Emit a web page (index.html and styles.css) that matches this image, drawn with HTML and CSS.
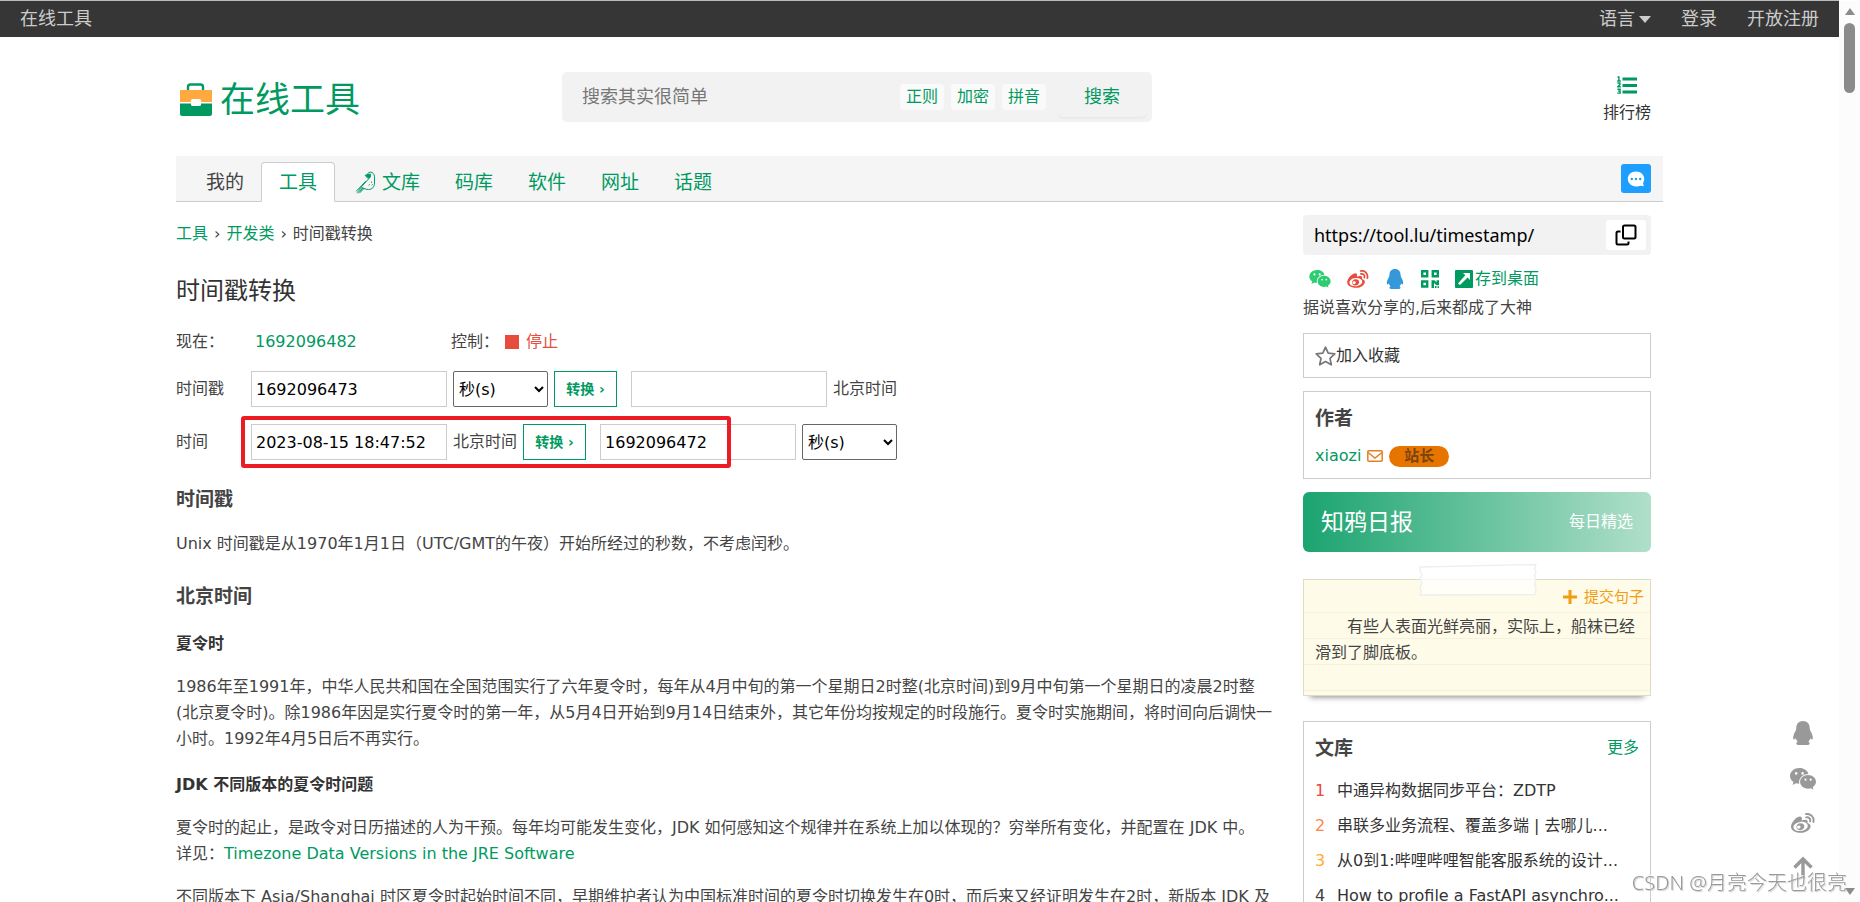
FILE: index.html
```html
<!DOCTYPE html>
<html lang="zh-CN">
<head>
<meta charset="utf-8">
<title>时间戳转换 - 在线工具</title>
<link rel="stylesheet" href="styles.css">
</head>
<body>
<svg class="defs" aria-hidden="true">
  <symbol id="qq" viewBox="0 0 20 24"><path d="M10 0C5.700 0 3.300 3.100 3.300 7c0 1-.2 1.700-.7 2.800C1 12.500 0 15 .2 17.200c.1 1.100.5 1.600 1 1.300.6-.3 1-.7 1.400-1.200.3 1.300 1 2.500 2 3.400-.8.500-1.300 1-1.300 1.700 0 1.100 1.400 1.600 3.400 1.600h6.600c2 0 3.400-.5 3.400-1.600 0-.7-.5-1.200-1.300-1.700 1-.9 1.700-2.100 2-3.400.4.500.8.9 1.400 1.200.5.300.9-.2 1-1.300.2-2.200-.8-4.700-2.400-7.400-.5-1.100-.7-1.800-.7-2.800C16.700 3.100 14.300 0 10 0z" fill="currentColor"/></symbol>
  <symbol id="wechat" viewBox="0 0 26 22"><path fill="currentColor" fill-rule="evenodd" d="M9.500 0C4.200 0 0 3.500 0 7.900c0 2.500 1.300 4.600 3.500 6L2.600 17l3.400-1.700c1.200.3 2 .5 3.200.5-.9-5.500 3.200-9.700 9.300-9.900C17.500 2.400 13.900 0 9.500 0zM6.200 4.100a1.300 1.300 0 1 1 0 2.600 1.300 1.300 0 0 1 0-2.600zm6.400 0a1.300 1.300 0 1 1 0 2.600 1.300 1.300 0 0 1 0-2.600zM18.100 6.900c-4.600 0-8 3.100-8 6.900s3.500 6.900 8 6.900c1 0 1.900-.2 2.800-.5l2.500 1.500-.7-2.500c2-1.300 3.300-3.200 3.300-5.400 0-3.800-3.600-6.900-7.900-6.900zm-2.600 3.700a1 1 0 1 1 0 2.100 1 1 0 0 1 0-2.100zm5.200 0a1 1 0 1 1 0 2.100 1 1 0 0 1 0-2.100z"/></symbol>
  <symbol id="weibo" viewBox="0 0 24 20"><path fill="currentColor" fill-rule="evenodd" d="M10.500 4.200c.9 1 .3 2.800.3 3.200 2.500-1 5-.9 5.700.3.400.7.100 1.700-.1 2.300 1.900.5 3.200 1.500 3.200 3.200 0 3-4.200 6.600-9.800 6.600C4.400 19.800 0 17.300 0 13.700c0-2 1.300-4.600 3.500-6.900 2.800-2.800 5.700-4 7-2.600zM9.200 8.900c-4 .4-7 2.900-6.700 5.500.3 2.500 3.600 4 7.600 3.600s6.900-2.900 6.600-5.500c-.2-2.500-3.600-4-7.500-3.600zm-.1 1.400c2.800-.3 4.600 1.500 4.200 3.700-.4 2.200-2.500 3.400-4.700 3.200-2.100-.2-3.400-1.700-3.100-3.600.3-1.800 1.700-3.100 3.600-3.300zm-1.200 2.300c-1.100 0-1.900.8-1.900 1.700s.7 1.500 1.700 1.400c1.100-.1 1.900-.9 1.800-1.800 0-.8-.7-1.300-1.600-1.300z"/><path d="M15.200 4.400c2.600-.5 4.600 1.400 3.900 4M14.900 1.100c4.700-1 8.600 3 7.500 7.900" fill="none" stroke="currentColor" stroke-width="1.900" stroke-linecap="round"/></symbol>
</svg>

<div class="page">
  <header class="topbar">
    <a href="#">在线工具</a>
    <nav class="topbar-right" aria-label="账户">
      <a href="#">语言<span class="caret"></span></a>
      <a href="#">登录</a>
      <a href="#">开放注册</a>
    </nav>
  </header>

  <div class="container">
    <div class="masthead">
      <a class="logo" href="#">
        <svg width="34" height="34" viewBox="0 0 34 34" aria-hidden="true"><path d="M9 8V4q0-2.500 2.500-2.500h10Q24 1.500 24 4v4" fill="none" stroke="#009a61" stroke-width="2.400"/><path d="M1 7h32v12H1z" fill="#ffa940"/><path d="M1 20.500h32V31q0 2-2 2H3q-2 0-2-2z" fill="#009a61"/><rect x="12" y="16" width="10" height="7" rx="1.500" fill="#fff"/></svg>
        <span>在线工具</span>
      </a>
      <form class="search">
        <input type="text" placeholder="搜索其实很简单" aria-label="搜索">
        <a class="tag" href="#">正则</a><a class="tag" href="#">加密</a><a class="tag" href="#">拼音</a>
        <button type="button">搜索</button>
      </form>
      <a class="rank" href="#">
        <svg width="20" height="18" viewBox="0 0 20 18" aria-hidden="true"><path d="M5.500 1.500H20v3H5.500zM5.500 8H20v3H5.500zM5.500 14.500H20v3H5.500z" fill="#009a61"/><path d="M.5 1h1.400v4M.2 5h3.600M.4 7h2.500v1.600L.8 10.800h3M.4 13.200h2.700v3.900H.3M1 15.100h2" fill="none" stroke="#009a61" stroke-width="1.400"/></svg>
        <span>排行榜</span>
      </a>
    </div>

    <nav class="tabs" aria-label="栏目">
      <a class="mine" href="#">我的</a>
      <a class="active" href="#">工具</a>
      <a href="#"><svg class="parrot" width="22" height="24" viewBox="0 0 22 24" fill="none" stroke="#009a61" stroke-width="1" stroke-linecap="round" stroke-linejoin="round" aria-hidden="true"><path d="M12 5C12.500 2.500 15 1.500 17 2.500c2 1 2.500 3 2.500 5.500v5c0 4-2.500 6.500-6 6.500-1.800 0-3-.4-4.500-1M15.500 6.500 13.500 9 4 19.500M2 22.500l5-5 2 1-4 4M3.500 23l4-4.500M1.500 21l9-9.500"/><path d="M10.500 5.200 15.500 4 15 7.500l-2 .5z" fill="#009a61"/><path d="M16.500 12v.5M17.500 14.500l-.5.500M14 15l.5-.3"/></svg>文库</a>
      <a href="#">码库</a>
      <a href="#">软件</a>
      <a href="#">网址</a>
      <a href="#">话题</a>
      <button class="chat" type="button" aria-label="留言"><svg width="18" height="16" viewBox="0 0 18 16" aria-hidden="true"><path d="M9 .5c4.700 0 8.200 3.200 8.200 7.300 0 1.800-.6 3.300-1.200 4.400l.8 3.100-3-.5C12.400 15.400 10.800 15.500 9 15.500 4.300 15.500.8 12 .8 7.800S4.300.5 9 .5z" fill="#fff"/><g fill="#1e9fff"><circle cx="4.800" cy="8" r="1.200"/><circle cx="9" cy="8" r="1.200"/><circle cx="13.200" cy="8" r="1.200"/></g></svg></button>
    </nav>

    <div class="columns">
      <main>
        <nav class="crumbs" aria-label="面包屑"><a href="#">工具</a><span>›</span><a href="#">开发类</a><span>›</span>时间戳转换</nav>
        <h1>时间戳转换</h1>

        <div class="now"><span class="lab">现在：</span><span class="clock">1692096482</span><span>控制：</span><a class="stop" href="#"><i></i>停止</a></div>

        <form class="convert">
          <div class="row">
            <label class="lab" for="ts">时间戳</label>
            <input id="ts" type="text" value="1692096473">
            <select aria-label="单位"><option>秒(s)</option></select>
            <button type="button">转换 ›</button>
            <input class="result" type="text" aria-label="转换结果">
            <span>北京时间</span>
          </div>
          <div class="row">
            <label class="lab" for="dt">时间</label>
            <input id="dt" type="text" value="2023-08-15 18:47:52">
            <span>北京时间</span>
            <button type="button">转换 ›</button>
            <input class="result" type="text" value="1692096472" aria-label="时间戳结果">
            <select aria-label="结果单位"><option>秒(s)</option></select>
            <div class="marker"></div>
          </div>
        </form>

        <h2>时间戳</h2>
        <p>Unix 时间戳是从1970年1月1日（UTC/GMT的午夜）开始所经过的秒数，不考虑闰秒。</p>
        <h2>北京时间</h2>
        <h3>夏令时</h3>
        <p>1986年至1991年，中华人民共和国在全国范围实行了六年夏令时，每年从4月中旬的第一个星期日2时整(北京时间)到9月中旬第一个星期日的凌晨2时整<br>(北京夏令时)。除1986年因是实行夏令时的第一年，从5月4日开始到9月14日结束外，其它年份均按规定的时段施行。夏令时实施期间，将时间向后调快一<br>小时。1992年4月5日后不再实行。</p>
        <h3>JDK 不同版本的夏令时问题</h3>
        <p>夏令时的起止，是政令对日历描述的人为干预。每年均可能发生变化，JDK 如何感知这个规律并在系统上加以体现的？穷举所有变化，并配置在 JDK 中。<br>详见：<a href="#">Timezone Data Versions in the JRE Software</a></p>
        <p>不同版本下 Asia/Shanghai 时区夏令时起始时间不同，早期维护者认为中国标准时间的夏令时切换发生在0时，而后来又经证明发生在2时，新版本 JDK 及</p>
      </main>

      <aside>
        <div class="url">
          <input type="text" value="https://tool.lu/timestamp/" aria-label="网址" readonly>
          <button type="button" aria-label="复制"><svg width="22" height="22" viewBox="0 0 22 22" fill="none" stroke="#000" stroke-width="2" aria-hidden="true"><rect x="8" y="1.500" width="12.500" height="13" rx="1.500"/><path d="M5.500 7.500H3Q1.500 7.500 1.500 9v10q0 1.500 1.500 1.500h9q1.500 0 1.500-1.500v-1.500"/></svg></button>
        </div>
        <div class="share">
          <a class="c-wechat" href="#" aria-label="微信"><svg width="22" height="18"><use href="#wechat"/></svg></a>
          <a class="c-weibo" href="#" aria-label="微博"><svg width="22" height="18"><use href="#weibo"/></svg></a>
          <a class="c-qq" href="#" aria-label="QQ"><svg width="20" height="20"><use href="#qq"/></svg></a>
          <a href="#" aria-label="二维码"><svg width="18" height="18" viewBox="0 0 18 18"><path d="M1.200 1.200h5v5h-5zM11.800 1.200h5v5h-5zM1.200 11.500h5v5h-5z" fill="none" stroke="#009a61" stroke-width="2.400"/><path d="M10.500 10.200h3l2 2.400v-2.400H18v5h-2.500L13 13v5h-2.500zM14 16h1.500v2H14zM16.500 16.200H18V18h-1.500z" fill="#009a61"/></svg></a>
          <a class="desk" href="#"><svg width="18" height="18" viewBox="0 0 18 18" aria-hidden="true"><rect width="18" height="18" rx="1" fill="#009a61"/><path d="M8 3h7v7l-2.400-2.400L5 15l-2-1.500 7.300-8.200z" fill="#fff"/></svg>存到桌面</a>
        </div>
        <div class="slogan">据说喜欢分享的,后来都成了大神</div>

        <a class="box fav" href="#"><svg width="21" height="20" viewBox="0 0 21 20" aria-hidden="true"><path d="M10.500 1.200l2.700 5.900 6.600.7-4.800 4.500 1.300 6.500-5.800-3.200-5.800 3.200L6 12.300 1.200 7.800l6.600-.7z" fill="none" stroke="#777" stroke-width="1.700" stroke-linejoin="round"/></svg>加入收藏</a>

        <section class="box author">
          <h2>作者</h2>
          <div class="who"><a href="#">xiaozi</a><svg width="16" height="12" viewBox="0 0 16 12" fill="none" stroke="#e67e22" stroke-width="1.500" aria-hidden="true"><rect x=".8" y=".8" width="14.400" height="10.400" rx="1"/><path d="M1 2.500 8 8l7-5.500"/></svg><span class="pill">站长</span></div>
        </section>

        <a class="banner" href="#"><b>知鸦日报</b><span>每日精选</span></a>

        <section class="note">
          <svg class="tape" width="118" height="32" viewBox="0 0 118 32" aria-hidden="true"><path d="M1 3 117 .5l-1.500 4 1.500 4-1.500 4 1.500 4-1.500 4 1.500 4-1 6L1 31l1.500-4L1 23l2-4-2-4 2-4-2-4z" fill="#fff" fill-opacity=".75" stroke="#eeeeeb" stroke-width="1.300"/></svg>
          <a class="submit" href="#"><svg width="14" height="14" viewBox="0 0 14 14" aria-hidden="true"><path d="M7 0v14M0 7h14" stroke="#f39c12" stroke-width="3"/></svg>提交句子</a>
          <p>有些人表面光鲜亮丽，实际上，船袜已经滑到了脚底板。</p>
        </section>

        <section class="box docs">
          <div class="docs-head"><h2>文库</h2><a href="#">更多</a></div>
          <ol>
            <li><em>1</em><a href="#">中通异构数据同步平台：ZDTP</a></li>
            <li><em>2</em><a href="#">串联多业务流程、覆盖多端 | 去哪儿...</a></li>
            <li><em>3</em><a href="#">从0到1:哔哩哔哩智能客服系统的设计...</a></li>
            <li><em>4</em><a href="#">How to profile a FastAPI asynchro...</a></li>
          </ol>
        </section>
      </aside>
    </div>
  </div>
</div>

<div class="float">
  <a href="#" aria-label="QQ"><svg width="20" height="24"><use href="#qq"/></svg></a>
  <a href="#" aria-label="微信"><svg width="26" height="22"><use href="#wechat"/></svg></a>
  <a href="#" aria-label="微博"><svg width="24" height="20"><use href="#weibo"/></svg></a>
  <a href="#" aria-label="返回顶部"><svg width="20" height="24" viewBox="0 0 20 24"><path d="M10 23V3M1.500 11.500 10 3l8.500 8.500" fill="none" stroke="currentColor" stroke-width="3.400"/></svg></a>
</div>
<div class="scroll"><i class="up"></i><i class="thumb"></i><i class="down"></i></div>
<div class="watermark">CSDN @月亮今天也很亮</div>
</body>
</html>
```

FILE: styles.css
```css
* { box-sizing: border-box; }
html, body { height: 100%; }
body {
  margin: 0;
  overflow: hidden;
  background: #fff;
  color: #444;
  font: 16px/26px "DejaVu Sans", "Noto Sans CJK SC", sans-serif;
}
a { color: #009a61; text-decoration: none; }
svg { display: block; flex: none; }
input, select, button { font: inherit; color: #000; margin: 0; }
h1, h2, h3, p, ol { margin: 0; padding: 0; }
.defs { position: absolute; width: 0; height: 0; }
.page { height: 100%; overflow: hidden; margin-right: 21px; }

.topbar {
  display: flex;
  justify-content: space-between;
  align-items: center;
  height: 37px;
  padding: 0 20px;
  border-top: 1px solid #bbb;
  background: #363636;
  font-size: 18px;
}
.topbar a { color: #ccc; display: flex; align-items: center; }
.topbar-right { display: flex; gap: 30px; }
.caret { margin-left: 4px; border: 6px solid transparent; border-top: 7px solid #ccc; border-bottom: 0; }

.container { max-width: 1487px; margin: 0 auto; }
.masthead {
  display: flex;
  justify-content: space-between;
  align-items: center;
  height: 119px;
  padding: 0 12px 0 3px;
}
.logo { display: flex; align-items: center; gap: 7px; padding-top: 6px; font-size: 35px; line-height: 50px; width: 383px; }
.search {
  display: flex;
  align-items: center;
  width: 590px;
  height: 50px;
  padding: 0 5px 0 20px;
  border-radius: 5px;
  background: #f2f2f2;
}
.search input { flex: 1; min-width: 0; border: 0; padding: 0; background: none; font-size: 18px; outline: 0; }
.search input::placeholder { color: #777; opacity: 1; }
.tag { padding: 0 6px; margin-right: 7px; border-radius: 4px; background: #fafafa; }
.search button {
  width: 90px;
  height: 40px;
  margin-left: 4px;
  border: 0;
  border-radius: 5px;
  background: #f2f2f2;
  box-shadow: 0 2px 2px -1px #e4e4e4;
  color: #009a61;
  font-size: 18px;
}
.rank { display: flex; flex-direction: column; align-items: center; gap: 6px; margin-left: auto; padding-top: 9px; color: #333; }

.tabs {
  display: flex;
  align-items: flex-end;
  height: 46px;
  padding: 0 12px;
  border-bottom: 1px solid #ccc;
  background: #f5f5f5;
}
.tabs a {
  display: flex;
  align-items: center;
  height: 40px;
  margin: 0 0 -1px -1px;
  padding: 0 17px;
  border: 1px solid transparent;
  font-size: 19px;
}
.tabs .mine { color: #444; margin-left: 0; }
.tabs .active { border-color: #ccc; border-bottom-color: #fff; border-radius: 4px 4px 0 0; background: #fff; }
.parrot { margin: 0 5px 0 3px; }
.chat {
  display: grid;
  place-items: center;
  width: 30px;
  height: 29px;
  margin: 0 0 8px auto;
  padding: 0;
  border: 0;
  border-radius: 3px;
  background: #1e9fff;
}

.columns { display: flex; gap: 24px; padding-right: 12px; }
main { flex: 1; min-width: 0; padding-top: 19px; white-space: nowrap; }
aside { width: 348px; flex: none; padding-top: 13px; }
.crumbs span { margin: 0 6px; }
h1 { margin-top: 25px; font-size: 24px; line-height: 38px; font-weight: 400; color: #333; }
.now { display: flex; margin-top: 19px; }
.lab { width: 75px; flex: none; }
.now .lab { width: 79px; }
.clock { width: 196px; color: #009a61; }
.stop { display: flex; align-items: center; gap: 7px; color: #e74c3c; margin-left: 6px; }
.stop i { width: 14px; height: 14px; background: #e74c3c; }

.convert { display: grid; gap: 17px; margin-top: 16px; }
.row { position: relative; display: flex; align-items: center; height: 36px; gap: 6px; }
.row .lab { width: 69px; }
.row input { width: 196px; height: 36px; padding: 0 4px; border: 1px solid #ccc; background: #fff; }
.row select { width: 95px; height: 36px; padding: 0 1px; border: 1px solid #666; border-radius: 2px; background: #fff; }
.row button {
  width: 63px;
  height: 36px;
  padding: 0;
  border: 1px solid #009a61;
  background: #fff;
  color: #009a61;
  font-size: 14px;
  font-weight: 700;
}
.row .result { margin-left: 8px; }
.marker { position: absolute; left: 65px; top: -8px; width: 490px; height: 52px; border: 4px solid #ed1c24; border-radius: 3px; }

h2 { font-size: 19px; line-height: 30px; }
main h2 { margin-top: 24px; }
h3 { margin-top: 20px; color: #333; font-size: 16px; line-height: 26px; }
main p { margin-top: 17px; }

.url { display: flex; align-items: center; height: 40px; padding: 0 5px 0 11px; border-radius: 4px; background: #f2f2f2; }
.url input { flex: 1; min-width: 0; border: 0; padding: 0; background: none; font: 18px/26px "Noto Sans", sans-serif; }
.url button { display: grid; place-items: center; width: 40px; height: 30px; padding: 0; border: 0; border-radius: 3px; background: #fff; }
.share { display: flex; align-items: center; gap: 16px; height: 24px; margin: 12px 0 0 6px; }
.c-wechat { color: #2ecc71; }
.c-weibo { color: #e74c3c; }
.c-qq { color: #3498db; }
.desk { display: flex; align-items: center; gap: 2px; }
.slogan { margin-top: 4px; }
.box { display: block; border: 1px solid #ccc; padding: 0 11px; margin-top: 13px; }
.fav { display: flex; align-items: center; height: 45px; margin-top: 12px; color: #333; }
.author { height: 88px; padding-top: 11px; }
.who { display: flex; align-items: center; gap: 6px; margin-top: 10px; }
.pill { width: 60px; border-radius: 11px; background: #e87400; color: #7a4510; font-size: 15px; line-height: 21px; font-weight: 700; text-align: center; }
.banner {
  display: flex;
  justify-content: space-between;
  align-items: center;
  height: 60px;
  margin-top: 13px;
  padding: 0 18px;
  border-radius: 6px;
  background: linear-gradient(90deg, #1ba46f, #b0dfca);
  color: #fff;
}
.banner b { font-size: 23px; font-weight: 400; }
.note {
  position: relative;
  height: 117px;
  margin-top: 27px;
  padding: 4px 6px 0 11px;
  border: 1px solid #dfdcc6;
  background: repeating-linear-gradient(#fefbe8 0 25px, #f4f1df 25px 26px) 0 7px;
  box-shadow: 0 8px 6px -7px #888;
}
.tape { position: absolute; left: 115px; top: -16px; }
.submit { display: flex; align-items: center; justify-content: flex-end; gap: 7px; color: #f39c12; font-size: 15px; }
.note p { margin-top: 4px; text-indent: 2em; }
.docs { margin-top: 25px; padding: 11px 11px 20px; }
.docs-head { display: flex; justify-content: space-between; align-items: center; }
ol { list-style: none; margin-top: 10px; }
li { display: flex; line-height: 35px; white-space: nowrap; }
li a { color: #333; }
em { width: 22px; flex: none; font-style: normal; }
li:nth-child(1) em { color: #f5413b; }
li:nth-child(2) em { color: #ff8547; }
li:nth-child(3) em { color: #ffac38; }

.float { position: fixed; right: 44px; bottom: 22px; width: 26px; display: flex; flex-direction: column; align-items: center; gap: 23px; }
.float a { color: #999; }
.scroll { position: fixed; top: 1px; right: 0; bottom: 0; width: 21px; background: #fcfcfc; display: flex; flex-direction: column; align-items: center; padding: 7px 0; }
.up, .down { border: 5px solid transparent; }
.up { border-top: 0; border-bottom: 7px solid #8b8b8b; }
.down { border-bottom: 0; border-top: 7px solid #8b8b8b; margin-top: auto; }
.thumb { width: 11px; height: 70px; margin-top: 8px; border-radius: 6px; background: #8b8b8b; }
.watermark {
  position: fixed;
  right: 13px;
  bottom: 4px;
  color: #999;
  font: 20px/30px "Noto Sans", "Noto Sans CJK SC", sans-serif;
  font-weight: 300;
  text-shadow: -1px -1px 0 #fff, 1px 1px 1px #ccc;
}
```
